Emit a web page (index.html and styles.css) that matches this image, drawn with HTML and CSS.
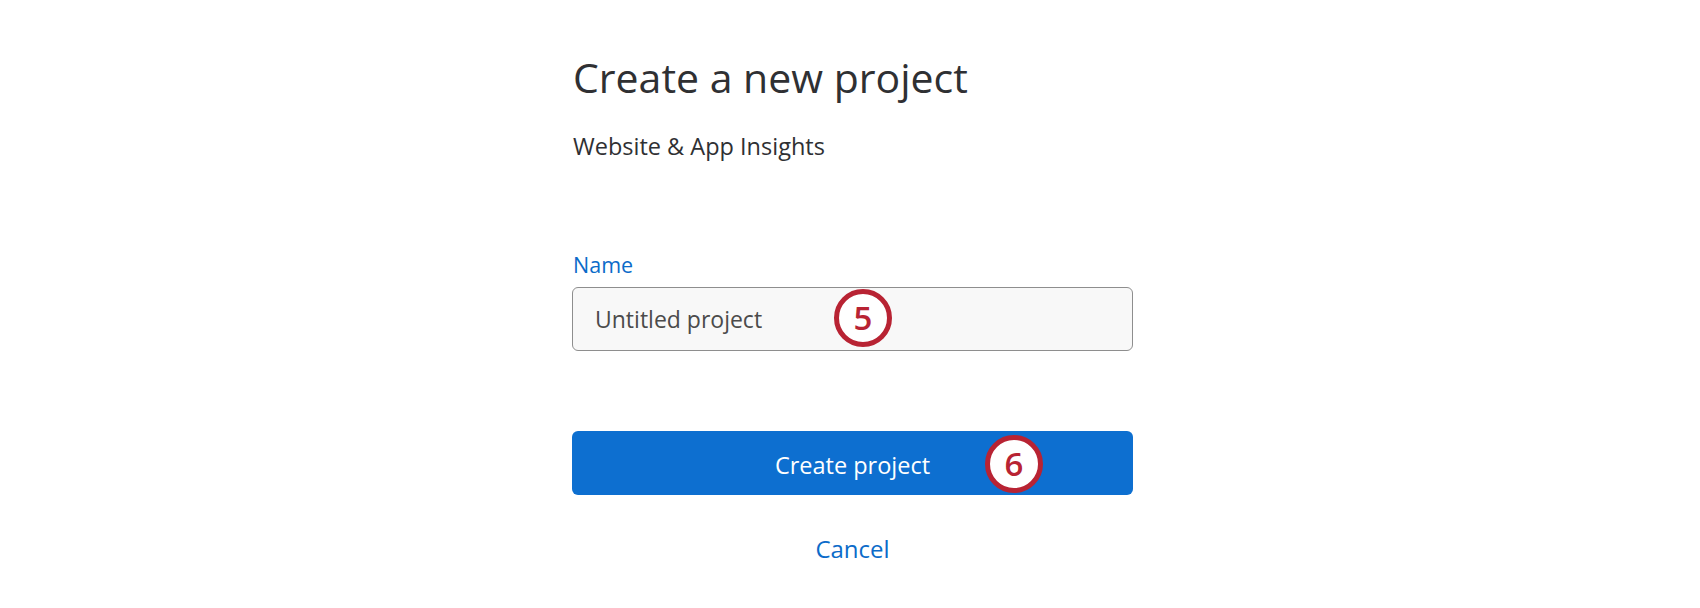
FILE: index.html
```html
<!DOCTYPE html>
<html lang="en">
<head>
<meta charset="utf-8">
<title>Create a new project</title>
<link rel="stylesheet" href="styles.css">
</head>
<body>
<main class="page">
  <section class="panel">
    <h1 class="title">Create a new project</h1>
    <p class="subtitle">Website &amp; App Insights</p>
    <label class="label" for="name">Name</label>
    <div class="field">
      <div class="input" id="name">Untitled project</div>
      <span class="marker marker-5">5</span>
    </div>
    <div class="button-wrap">
      <button class="primary">Create project</button>
      <span class="marker marker-6">6</span>
    </div>
    <a class="cancel" href="#">Cancel</a>
  </section>
</main>
</body>
</html>
```

FILE: styles.css
```css
* { box-sizing: border-box; }

html, body {
  margin: 0;
  padding: 0;
  background: #ffffff;
}

body {
  font-family: "Open Sans", "Liberation Sans", sans-serif;
  color: #323232;
}

.page {
  display: flex;
  justify-content: center;
  padding-left: 5px;
  padding-top: 52px;
}

.panel {
  width: 561px;
  display: flex;
  flex-direction: column;
}

.title {
  margin: 0;
  font-size: 41px;
  line-height: 50px;
  font-weight: 400;
  color: #2f3033;
  padding-left: 1px;
}

.subtitle {
  margin: 29px 0 0;
  font-size: 23.5px;
  line-height: 30px;
  color: #2f3033;
  padding-left: 1px;
}

.label {
  margin-top: 90px;
  font-size: 21.5px;
  line-height: 28px;
  font-weight: 500;
  color: #0b6bc9;
  padding-left: 1px;
}

.field {
  position: relative;
  margin-top: 8px;
}

.input {
  height: 64px;
  border: 1px solid #8e8e8e;
  border-radius: 6px;
  background: #f8f8f8;
  padding-left: 22px;
  font-size: 23px;
  line-height: 62px;
  color: #4b4b4b;
}

.button-wrap {
  position: relative;
  margin-top: 80px;
}

.primary {
  display: block;
  width: 100%;
  height: 64px;
  border: none;
  border-radius: 6px;
  background: #0d6fd0;
  color: #ffffff;
  font-family: "Open Sans", "Liberation Sans", sans-serif;
  font-size: 23.5px;
  font-weight: 500;
  line-height: 64px;
  padding: 2px 0 0;
  text-align: center;
}

.cancel {
  margin-top: 39px;
  align-self: center;
  font-size: 24px;
  line-height: 30px;
  font-weight: 500;
  color: #0b6bc9;
  text-decoration: none;
}

.marker {
  position: absolute;
  width: 58px;
  height: 58px;
  border: 5px solid #b82333;
  border-radius: 50%;
  background: #ffffff;
  color: #b82333;
  font-size: 33px;
  font-weight: 600;
  line-height: 48px;
  text-align: center;
}

.marker-5 {
  left: 262px;
  top: 2px;
}

.marker-6 {
  left: 413px;
  top: 4px;
}
```
